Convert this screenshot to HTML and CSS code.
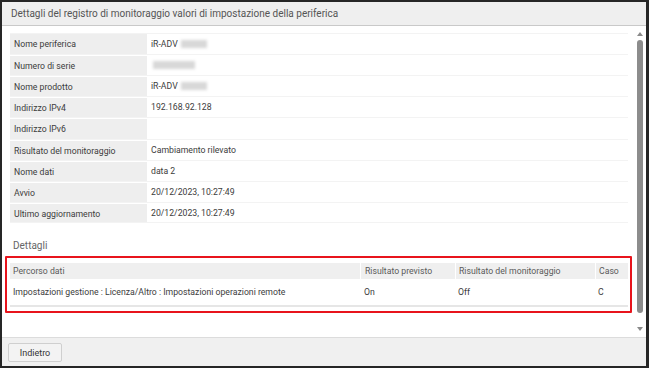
FILE: index.html
```html
<!DOCTYPE html>
<html lang="it">
<head>
<meta charset="utf-8">
<title>Dettagli</title>
<link rel="stylesheet" href="styles.css">
</head>
<body>
<div class="window">
  <div class="titlebar">Dettagli del registro di monitoraggio valori di impostazione della periferica</div>
  <div class="body">
    <div class="scroll">
      <div class="info">
        <div class="row"><div class="lbl">Nome periferica</div><div class="val">iR-ADV <span class="redact w26"></span></div></div>
        <div class="row"><div class="lbl">Numero di serie</div><div class="val"><span class="redact w42 nomargin"></span></div></div>
        <div class="row"><div class="lbl">Nome prodotto</div><div class="val">iR-ADV <span class="redact w26"></span></div></div>
        <div class="row"><div class="lbl">Indirizzo IPv4</div><div class="val">192.168.92.128</div></div>
        <div class="row tall"><div class="lbl">Indirizzo IPv6</div><div class="val"></div></div>
        <div class="row"><div class="lbl">Risultato del monitoraggio</div><div class="val">Cambiamento rilevato</div></div>
        <div class="row"><div class="lbl">Nome dati</div><div class="val">data 2</div></div>
        <div class="row"><div class="lbl">Avvio</div><div class="val">20/12/2023, 10:27:49</div></div>
        <div class="row"><div class="lbl">Ultimo aggiornamento</div><div class="val">20/12/2023, 10:27:49</div></div>
      </div>
      <div class="section-title">Dettagli</div>
      <div class="highlight">
        <div class="detail">
          <div class="dhead">
            <div class="c1">Percorso dati</div>
            <div class="c2">Risultato previsto</div>
            <div class="c3">Risultato del monitoraggio</div>
            <div class="c4">Caso</div>
          </div>
          <div class="drow">
            <div class="c1">Impostazioni gestione : Licenza/Altro : Impostazioni operazioni remote</div>
            <div class="c2">On</div>
            <div class="c3">Off</div>
            <div class="c4">C</div>
          </div>
        </div>
      </div>
    </div>
    <div class="scrollbar">
      <span class="arrow up"></span>
      <span class="thumb"></span>
      <span class="arrow down"></span>
    </div>
  </div>
  <div class="footer">
    <button class="btn">Indietro</button>
  </div>
</div>
</body>
</html>
```
FILE: styles.css
```css
* { box-sizing: border-box; }
html, body { margin: 0; padding: 0; background: #fff; }
body {
  font-family: Roboto, "Liberation Sans", sans-serif;
  font-size: 8.7px;
  color: #3c3c3c;
}
.window {
  width: 649px;
  height: 368px;
  border: 2px solid #262626;
  border-right-width: 3px;
  display: flex;
  flex-direction: column;
  overflow: hidden;
}
.titlebar {
  height: 24px;
  flex: none;
  background: #efefef;
  border-bottom: 1px solid #c9c9c9;
  padding-left: 9px;
  font-size: 10px;
  line-height: 23px;
  color: #555;
  white-space: nowrap;
}
.body {
  flex: 1;
  display: flex;
  min-height: 0;
}
.scroll {
  flex: 1;
  padding: 7px 0 0 3px;
}
.info {
  margin-left: 5px;
  width: 618px;
}
.row {
  display: flex;
  height: 21px;
  border-top: 1px solid #f3f3f3;
}
.row.tall { height: 22px; }
.row:last-child { border-bottom: 1px solid #f3f3f3; }
.lbl {
  width: 137px;
  flex: none;
  background: #eeeeee;
  padding-left: 4px;
  line-height: 20px;
  border-top: 1px solid #fff;
}
.row:first-child .lbl { border-top: 0; }
.val {
  flex: 1;
  padding-left: 4px;
  line-height: 20px;
}
.redact {
  display: inline-block;
  vertical-align: middle;
  height: 8px;
  background: #d8d8d8;
  filter: blur(1.5px);
  margin-left: 1px;
  margin-top: -2px;
}
.w26 { width: 26px; }
.w42 { width: 42px; }
.nomargin { margin-left: 2px; }
.section-title {
  margin: 17px 0 0 8px;
  font-size: 10px;
  line-height: 12px;
  color: #666;
  height: 16px;
}
.highlight {
  border: 2px solid #e8141c;
  border-radius: 1px;
  width: 627px;
  padding: 5px 2px 4px 3px;
}
.detail {
  border-bottom: 2px solid #e6e6e6;
}
.dhead, .drow {
  display: flex;
}
.dhead {
  background: #efefef;
  height: 16px;
  line-height: 16px;
  color: #5a5a5a;
}
.dhead > div { border-left: 1px solid #fff; }
.dhead > .c1 { border-left: 0; }
.drow {
  height: 26px;
  line-height: 27px;
}
.c1 { width: 350px; padding-left: 3px; }
.c2 { width: 95px; padding-left: 4px; }
.c3 { width: 140px; padding-left: 3px; }
.c4 { flex: 1; padding-left: 3px; }
.scrollbar {
  width: 13px;
  flex: none;
  position: relative;
  display: flex;
  flex-direction: column;
  align-items: center;
  padding-top: 6px;
}
.arrow {
  width: 0; height: 0;
  border-left: 3px solid transparent;
  border-right: 3px solid transparent;
}
.arrow.up { border-bottom: 4px solid #8a8a8a; }
.arrow.down { border-top: 4px solid #8a8a8a; margin-top: auto; margin-bottom: 6px; }
.thumb {
  width: 6px;
  height: 273px;
  background: #8c8c8c;
  border-radius: 3px;
  margin-top: 4px;
}
.footer {
  height: 29px;
  flex: none;
  background: #f0f0f0;
  border-top: 1px solid #dcdcdc;
  padding: 5px 0 0 6px;
}
.btn {
  font-family: inherit;
  font-size: 9px;
  color: #333;
  width: 54px;
  height: 19px;
  background: #f3f3f3;
  border: 1px solid #cfcfcf;
  border-radius: 2px;
  padding: 0;
}
```
